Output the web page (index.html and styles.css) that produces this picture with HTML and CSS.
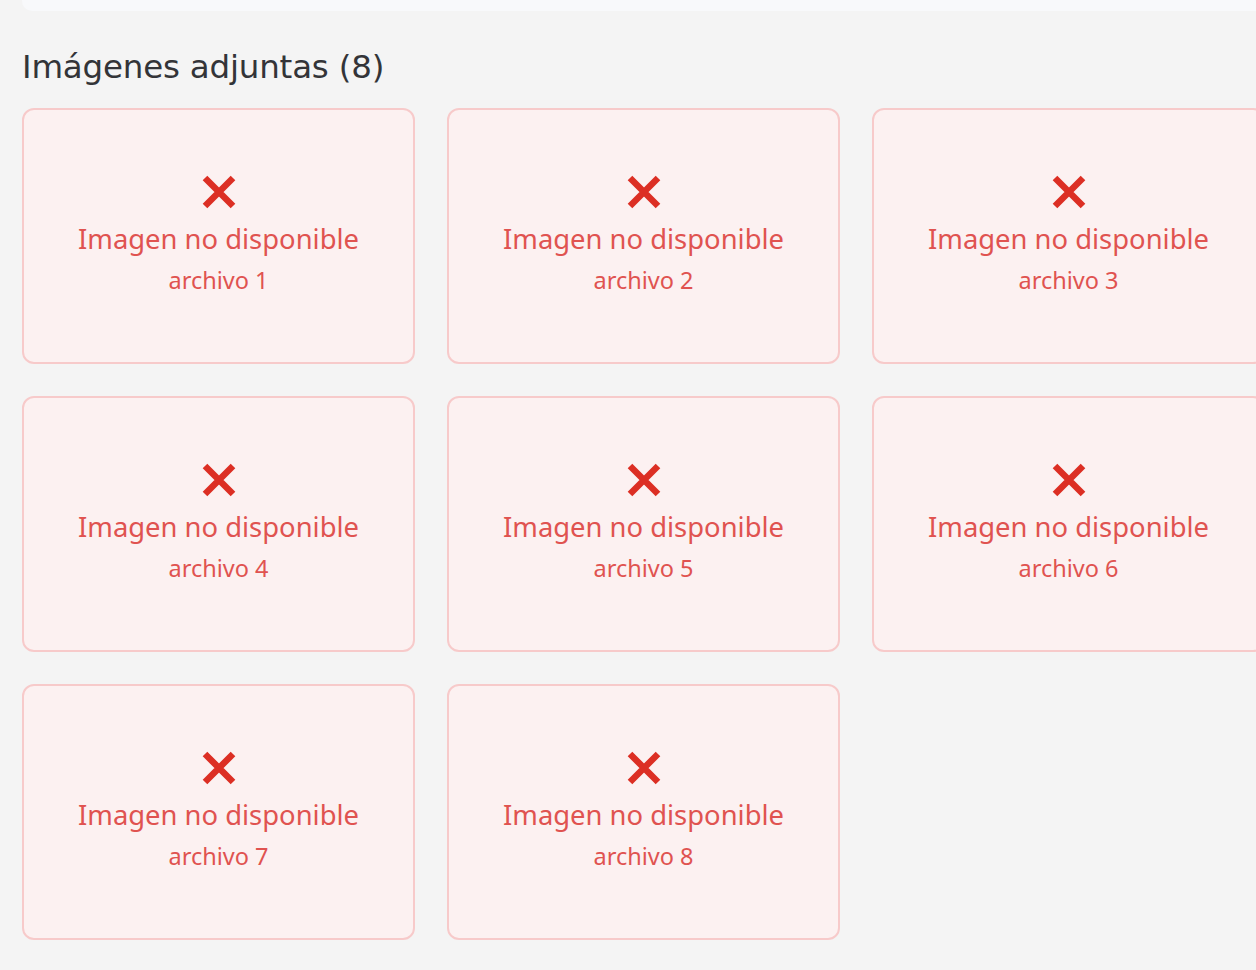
FILE: index.html
```html
<!DOCTYPE html>
<html lang="es">
<head>
<meta charset="utf-8">
<title>Imágenes adjuntas</title>
<link rel="stylesheet" href="styles.css">
</head>
<body>
<div class="page">
  <div class="top-card"></div>
  <h2 class="title">Imágenes adjuntas (8)</h2>
  <div class="grid">
    <div class="card"><svg class="x" viewBox="0 0 34 34"><path d="M3 3L31 31M31 3L3 31"/></svg><div class="msg">Imagen no disponible</div><div class="name">archivo 1</div></div>
    <div class="card"><svg class="x" viewBox="0 0 34 34"><path d="M3 3L31 31M31 3L3 31"/></svg><div class="msg">Imagen no disponible</div><div class="name">archivo 2</div></div>
    <div class="card"><svg class="x" viewBox="0 0 34 34"><path d="M3 3L31 31M31 3L3 31"/></svg><div class="msg">Imagen no disponible</div><div class="name">archivo 3</div></div>
    <div class="card"><svg class="x" viewBox="0 0 34 34"><path d="M3 3L31 31M31 3L3 31"/></svg><div class="msg">Imagen no disponible</div><div class="name">archivo 4</div></div>
    <div class="card"><svg class="x" viewBox="0 0 34 34"><path d="M3 3L31 31M31 3L3 31"/></svg><div class="msg">Imagen no disponible</div><div class="name">archivo 5</div></div>
    <div class="card"><svg class="x" viewBox="0 0 34 34"><path d="M3 3L31 31M31 3L3 31"/></svg><div class="msg">Imagen no disponible</div><div class="name">archivo 6</div></div>
    <div class="card"><svg class="x" viewBox="0 0 34 34"><path d="M3 3L31 31M31 3L3 31"/></svg><div class="msg">Imagen no disponible</div><div class="name">archivo 7</div></div>
    <div class="card"><svg class="x" viewBox="0 0 34 34"><path d="M3 3L31 31M31 3L3 31"/></svg><div class="msg">Imagen no disponible</div><div class="name">archivo 8</div></div>
  </div>
</div>
</body>
</html>
```
FILE: styles.css
```css
html, body {
  margin: 0;
  padding: 0;
  background: #f4f4f4;
  overflow: hidden;
}
.page {
  padding-left: 22px;
  width: 1300px;
}
.top-card {
  height: 11px;
  background: #f8f9fb;
  border-radius: 0 0 10px 10px;
}
.title {
  margin: 0 0 21px 0;
  padding-top: 36px;
  font-family: "DejaVu Sans", sans-serif;
  font-weight: 400;
  font-size: 32.5px;
  line-height: 40px;
  color: #333438;
  letter-spacing: -0.2px;
}
.grid {
  display: grid;
  grid-template-columns: repeat(3, 393px);
  grid-auto-rows: 256px;
  column-gap: 32px;
  row-gap: 32px;
}
.card {
  box-sizing: border-box;
  border: 2px solid #f7caca;
  border-radius: 12px;
  background: #fcf1f1;
  display: flex;
  flex-direction: column;
  align-items: center;
  justify-content: center;
  font-family: "Noto Sans", sans-serif;
  color: #e05350;
  padding-bottom: 2px;
}
.x {
  width: 34px;
  height: 34px;
  display: block;
}
.x path {
  stroke: #dc2f24;
  stroke-width: 6.5;
  fill: none;
}
.msg {
  font-size: 27.4px;
  line-height: 36px;
  margin-top: 12px;
}
.name {
  font-size: 23.5px;
  line-height: 30px;
  margin-top: 8px;
}
```
